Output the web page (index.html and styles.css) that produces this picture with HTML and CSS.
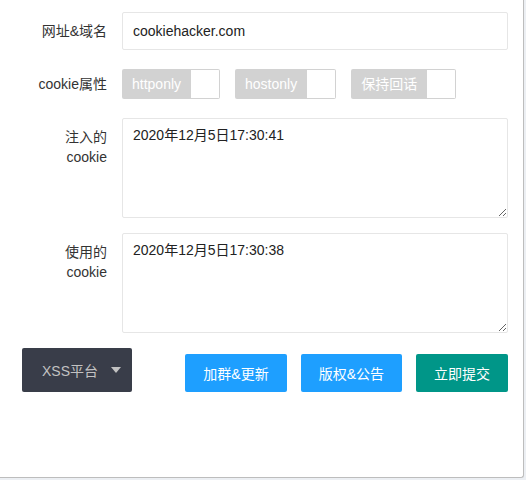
FILE: index.html
```html
<!DOCTYPE html>
<html lang="zh-CN">
<head>
<meta charset="utf-8">
<title>cookie</title>
<link rel="stylesheet" href="styles.css">
</head>
<body>
<div class="panel">
  <form class="form">
    <div class="row">
      <label class="label">网址&amp;域名</label>
      <div class="field"><input class="input" type="text" value="cookiehacker.com"></div>
    </div>
    <div class="row">
      <label class="label">cookie属性</label>
      <div class="field checks">
        <div class="check"><span>httponly</span><i></i></div>
        <div class="check"><span>hostonly</span><i></i></div>
        <div class="check"><span>保持回话</span><i></i></div>
      </div>
    </div>
    <div class="row">
      <label class="label">注入的<br>cookie</label>
      <div class="field"><textarea class="textarea">2020年12月5日17:30:41</textarea></div>
    </div>
    <div class="row">
      <label class="label">使用的<br>cookie</label>
      <div class="field"><textarea class="textarea">2020年12月5日17:30:38</textarea></div>
    </div>
    <div class="actions">
      <div class="dropdown">XSS平台<span class="caret"></span></div>
      <div class="btns">
        <button type="button" class="btn btn-blue">加群&amp;更新</button>
        <button type="button" class="btn btn-blue">版权&amp;公告</button>
        <button type="button" class="btn btn-teal">立即提交</button>
      </div>
    </div>
  </form>
</div>
</body>
</html>
```

FILE: styles.css
```css
html, body {
  margin: 0;
  padding: 0;
}
body {
  width: 526px;
  height: 480px;
  background: #eceff3;
  font-family: "Liberation Sans", Arial, "Noto Sans CJK SC", sans-serif;
  font-size: 14px;
  color: #333;
  overflow: hidden;
}
.panel {
  width: 523px;
  height: 477px;
  background: #fff;
  border-right: 1px solid #bdbdbd;
  border-bottom: 1px solid #bdbdbd;
  border-bottom-right-radius: 3px;
  box-sizing: content-box;
}
.form {
  padding-top: 12px;
}
.row {
  display: flex;
  gap: 15px;
  margin-bottom: 15px;
}
.label {
  width: 107px;
  flex: none;
  text-align: right;
  padding: 9px 0;
  line-height: 20px;
  box-sizing: border-box;
  color: #333;
}
.field {
  width: 386px;
}
.input {
  display: block;
  width: 386px;
  height: 38px;
  box-sizing: border-box;
  border: 1px solid #e6e6e6;
  border-radius: 2px;
  padding: 0 10px;
  font: inherit;
  color: #222;
  outline: none;
}
.checks {
  display: flex;
  gap: 15px;
  height: 38px;
  padding-top: 4px;
  box-sizing: border-box;
}
.check {
  display: flex;
  height: 30px;
}
.check span {
  background: #d2d2d2;
  color: #fff;
  padding: 0 10px;
  line-height: 30px;
  border-radius: 2px 0 0 2px;
}
.check i {
  width: 28px;
  height: 28px;
  border: 1px solid #d2d2d2;
  border-left: none;
  border-radius: 0 2px 2px 0;
  background: #fff;
}
.textarea {
  display: block;
  width: 386px;
  height: 100px;
  box-sizing: border-box;
  border: 1px solid #e6e6e6;
  border-radius: 2px;
  padding: 6px 10px;
  font: inherit;
  line-height: 20px;
  color: #222;
  outline: none;
  resize: both;
}
.actions {
  display: flex;
  align-items: flex-end;
  justify-content: space-between;
  padding: 0 15px 0 22px;
}
.dropdown {
  width: 110px;
  height: 44px;
  background: #393d49;
  color: #c2c2c2;
  border-radius: 2px;
  display: flex;
  align-items: center;
  padding-left: 20px;
  box-sizing: border-box;
}
.caret {
  margin-left: 13px;
  width: 0;
  height: 0;
  border-left: 5.5px solid transparent;
  border-right: 5.5px solid transparent;
  border-top: 6px solid #c2c2c2;
}
.btns {
  display: flex;
  gap: 14px;
}
.btn {
  height: 38px;
  line-height: 38px;
  padding: 0 18px;
  border: none;
  border-radius: 2px;
  color: #fff;
  font: inherit;
  cursor: pointer;
}
.btn-blue {
  background: #1e9fff;
}
.btn-teal {
  background: #009688;
}
```
